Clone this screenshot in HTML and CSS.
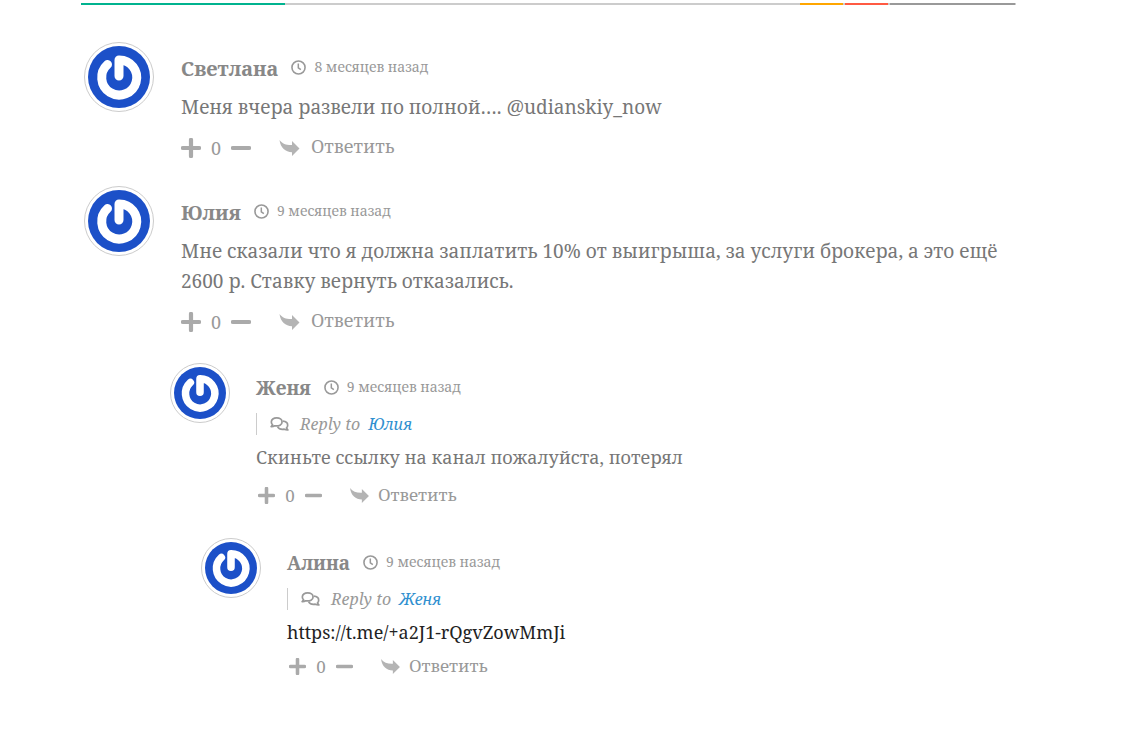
FILE: index.html
```html
<!DOCTYPE html>
<html lang="ru">
<head>
  <meta charset="utf-8">
  <title>Комментарии</title>
  <link rel="stylesheet" href="styles.css">
</head>
<body>
  <svg class="sprite" aria-hidden="true">
    <symbol id="power" viewBox="0 0 62 62">
      <rect width="62" height="62" fill="#1c50c8"/>
      <path d="M19.500 18.500A17.500 17.500 0 1 0 31 14V30" fill="none" stroke="#fff" stroke-width="9" stroke-linecap="round" stroke-linejoin="round"/>
    </symbol>
    <symbol id="clock" viewBox="0 0 16 16">
      <circle cx="8" cy="8" r="7" fill="none" stroke="currentColor" stroke-width="1.700"/>
      <path d="M7.800 3.800V8.300L10.500 10.300" fill="none" stroke="currentColor" stroke-width="1.600"/>
    </symbol>
    <symbol id="plus" viewBox="0 0 20 20">
      <path d="M10 1.800V18.200M1.800 10H18.200" stroke="currentColor" stroke-width="4.200" stroke-linecap="round"/>
    </symbol>
    <symbol id="minus" viewBox="0 0 20 20">
      <path d="M1.800 10H18.200" stroke="currentColor" stroke-width="4.200" stroke-linecap="round"/>
    </symbol>
    <symbol id="arrow" viewBox="0 0 20 18">
      <path d="M0 1C3 5 7 6.200 12.500 6V2L20 9.500L12.500 17V13.200C6 13 1 9 0 1Z" fill="currentColor"/>
    </symbol>
    <symbol id="chat" viewBox="0 0 20 16">
      <path d="M7 1.500C3.800 1.500 1.400 3.300 1.400 5.800C1.400 7 1.900 8 2.700 8.800L1.200 10.800C2.800 10.900 4 10.500 5 9.900C9.500 10.600 12.700 8.700 12.700 5.800C12.700 3.300 10.200 1.500 7 1.500Z" fill="none" stroke="currentColor" stroke-width="1.800" stroke-linejoin="round"/>
      <path d="M13.500 5C16.600 5.200 18.600 7 18.600 9.200C18.600 10.400 18.100 11.400 17.300 12.200L18.800 14.300C17.200 14.400 16 14 15 13.400C11.900 13.900 9.200 13 8 11" fill="none" stroke="currentColor" stroke-width="1.800" stroke-linejoin="round"/>
    </symbol>
  </svg>

  <main class="comments">
    <div class="topline">
      <span class="green"></span>
      <span class="orange"></span>
      <span class="red"></span>
      <span class="gray"></span>
    </div>

    <article class="comment">
      <svg class="avatar"><use href="#power"/></svg>
      <div class="body">
        <header>
          <b class="author">Светлана</b>
          <svg class="clock"><use href="#clock"/></svg>
          <time>8 месяцев назад</time>
        </header>
        <p class="text">Меня вчера развели по полной…. @udianskiy_now</p>
        <div class="actions">
          <button class="vote" aria-label="Плюс"><svg><use href="#plus"/></svg></button>
          <span class="count">0</span>
          <button class="vote" aria-label="Минус"><svg><use href="#minus"/></svg></button>
          <button class="answer"><svg><use href="#arrow"/></svg>Ответить</button>
        </div>
      </div>
    </article>

    <article class="comment">
      <svg class="avatar"><use href="#power"/></svg>
      <div class="body">
        <header>
          <b class="author">Юлия</b>
          <svg class="clock"><use href="#clock"/></svg>
          <time>9 месяцев назад</time>
        </header>
        <p class="text">Мне сказали что я должна заплатить 10% от выигрыша, за услуги брокера, а это ещё 2600 р. Ставку вернуть отказались.</p>
        <div class="actions">
          <button class="vote" aria-label="Плюс"><svg><use href="#plus"/></svg></button>
          <span class="count">0</span>
          <button class="vote" aria-label="Минус"><svg><use href="#minus"/></svg></button>
          <button class="answer"><svg><use href="#arrow"/></svg>Ответить</button>
        </div>
      </div>
    </article>

    <div class="replies">
      <article class="comment reply">
        <svg class="avatar"><use href="#power"/></svg>
        <div class="body">
          <header>
            <b class="author">Женя</b>
            <svg class="clock"><use href="#clock"/></svg>
            <time>9 месяцев назад</time>
          </header>
          <div class="reply-to"><svg><use href="#chat"/></svg>Reply to <a href="#">Юлия</a></div>
          <p class="text">Скиньте ссылку на канал пожалуйста, потерял</p>
          <div class="actions">
            <button class="vote" aria-label="Плюс"><svg><use href="#plus"/></svg></button>
            <span class="count">0</span>
            <button class="vote" aria-label="Минус"><svg><use href="#minus"/></svg></button>
            <button class="answer"><svg><use href="#arrow"/></svg>Ответить</button>
          </div>
        </div>
      </article>

      <div class="nested">
        <article class="comment reply">
          <svg class="avatar"><use href="#power"/></svg>
          <div class="body">
            <header>
              <b class="author">Алина</b>
              <svg class="clock"><use href="#clock"/></svg>
              <time>9 месяцев назад</time>
            </header>
            <div class="reply-to"><svg><use href="#chat"/></svg>Reply to <a href="#">Женя</a></div>
            <p class="text"><a href="#">https://t.me/+a2J1-rQgvZowMmJi</a></p>
            <div class="actions">
              <button class="vote" aria-label="Плюс"><svg><use href="#plus"/></svg></button>
              <span class="count">0</span>
              <button class="vote" aria-label="Минус"><svg><use href="#minus"/></svg></button>
              <button class="answer"><svg><use href="#arrow"/></svg>Ответить</button>
            </div>
          </div>
        </article>
      </div>
    </div>
  </main>
</body>
</html>
```
FILE: styles.css
```css
* {
  box-sizing: border-box;
}

body {
  margin: 0;
  background: #fff;
  color: #777;
  font-family: "Noto Serif", "Droid Serif", "DejaVu Serif Condensed", "DejaVu Serif", serif;
}

.sprite {
  display: none;
}

.comments {
  padding: 3px 105px 40px 81px;
}

.topline {
  display: flex;
  gap: 2px;
  height: 2px;
  margin-bottom: 37px;
  padding-right: 1px;
  background: #ccc;
}

.green {
  width: 204px;
  margin-right: auto;
  background: #00b38f;
}

.orange {
  width: 43px;
  background: #ffa600;
}

.red {
  width: 43px;
  background: #ff5a43;
}

.gray {
  width: 125px;
  background: #999;
}

.comment {
  display: flex;
  gap: 27px;
  min-height: 144px;
  padding-left: 3px;
}

.avatar {
  flex: none;
  width: 70px;
  height: 70px;
  padding: 3px;
  border: 1px solid #ccc;
  border-radius: 50%;
}

.body {
  flex: 1;
  padding: 11px 0 25px;
}

header {
  display: flex;
  align-items: center;
  height: 30px;
}

.author {
  font-size: 20px;
  color: #888;
}

.clock {
  width: 15px;
  height: 15px;
  margin: 0 8px 2px 13px;
  color: #999;
}

time {
  padding-bottom: 3px;
  font-size: 14px;
  color: #999;
}

.text {
  margin: 9px 0 12px;
  font-size: 19px;
  line-height: 30px;
}

.text a {
  color: #222;
  text-decoration: none;
}

.actions {
  display: flex;
  align-items: center;
  height: 27px;
  font-size: 18px;
  color: #999;
}

button {
  padding: 0;
  border: 0;
  background: none;
  color: inherit;
  font: inherit;
  cursor: pointer;
}

.vote svg {
  display: block;
  width: 20px;
  height: 20px;
  color: #aaa;
}

.count {
  width: 30px;
  text-align: center;
}

.answer {
  display: flex;
  align-items: center;
  margin-left: 28px;
  padding-bottom: 3px;
}

.answer svg {
  width: 21px;
  height: 18px;
  margin: 3px 11px 0 0;
  color: #b4b4b4;
}

.replies {
  margin: 3px 0 0 86px;
}

.nested {
  margin-left: 31px;
}

.reply {
  gap: 26px;
  min-height: 175px;
}

.reply .avatar {
  width: 60px;
  height: 60px;
}

.reply .body {
  padding: 10px 0 0;
}

.reply .author {
  font-size: 19px;
}

.reply .text {
  margin: 7px 0 10px;
  font-size: 18px;
}

.nested .text {
  margin-bottom: 6px;
}

.reply .actions {
  padding-left: 2px;
  font-size: 17px;
}

.reply .vote svg {
  width: 17px;
  height: 17px;
}

.reply .answer svg {
  width: 19px;
  height: 17px;
  margin-right: 9px;
}

.reply-to {
  display: flex;
  align-items: center;
  height: 22px;
  margin-top: 10px;
  padding-left: 13px;
  border-left: 1px solid #ccc;
  font-size: 16px;
  font-style: italic;
  color: #999;
}

.reply-to svg {
  width: 19px;
  height: 16px;
  margin-right: 11px;
}

.reply-to a {
  margin-left: 8px;
  color: #3090d0;
  text-decoration: none;
}
```
